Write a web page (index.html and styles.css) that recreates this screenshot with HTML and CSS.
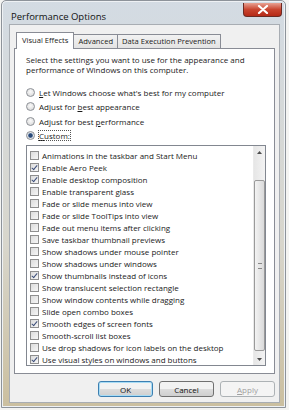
FILE: index.html
```html
<!DOCTYPE html>
<html lang="en">
<head>
  <meta charset="UTF-8" />
  <title>Performance Options</title>
  <link rel="stylesheet" href="styles.css">
</head>
<body>
  <div class="window">
    <div class="titlebar">
      <span class="title">Performance Options</span>
      <span class="close">
        <svg width="12" height="9" viewBox="0 0 12 9">
          <path d="M2 1 L10 8 M10 1 L2 8" stroke="#fff" stroke-width="2.2" stroke-linecap="round"/>
        </svg>
      </span>
    </div>

    <div class="client">
      <div class="tabs">
        <div class="tab active">Visual Effects</div>
        <div class="tab">Advanced</div>
        <div class="tab">Data Execution Prevention</div>
      </div>

      <div class="panel">
        <p class="intro">Select the settings you want to use for the appearance and<br>performance of Windows on this computer.</p>

        <div class="radios">
          <div class="radio"><span class="dot"></span><span><u>L</u>et Windows choose what's best for my computer</span></div>
          <div class="radio"><span class="dot"></span><span>Adjust for <u>b</u>est appearance</span></div>
          <div class="radio"><span class="dot"></span><span>Adjust for best <u>p</u>erformance</span></div>
          <div class="radio on"><span class="dot"></span><span class="focus"><u>C</u>ustom:</span></div>
        </div>

        <div class="listbox">
          <ul class="items">
            <li><span class="box"></span>Animations in the taskbar and Start Menu</li>
            <li class="checked"><span class="box"></span>Enable Aero Peek</li>
            <li class="checked"><span class="box"></span>Enable desktop composition</li>
            <li><span class="box"></span>Enable transparent glass</li>
            <li><span class="box"></span>Fade or slide menus into view</li>
            <li><span class="box"></span>Fade or slide ToolTips into view</li>
            <li><span class="box"></span>Fade out menu items after clicking</li>
            <li><span class="box"></span>Save taskbar thumbnail previews</li>
            <li><span class="box"></span>Show shadows under mouse pointer</li>
            <li><span class="box"></span>Show shadows under windows</li>
            <li class="checked"><span class="box"></span>Show thumbnails instead of icons</li>
            <li><span class="box"></span>Show translucent selection rectangle</li>
            <li><span class="box"></span>Show window contents while dragging</li>
            <li><span class="box"></span>Slide open combo boxes</li>
            <li class="checked"><span class="box"></span>Smooth edges of screen fonts</li>
            <li><span class="box"></span>Smooth-scroll list boxes</li>
            <li><span class="box"></span>Use drop shadows for icon labels on the desktop</li>
            <li class="checked"><span class="box"></span>Use visual styles on windows and buttons</li>
          </ul>
          <div class="scrollbar">
            <div class="arrow">
              <svg width="5" height="3" viewBox="0 0 5 3"><path d="M0 3 L2.5 0 L5 3 Z" fill="#4d4d4d"/></svg>
            </div>
            <div class="track">
              <div class="thumb"><span class="grip"></span></div>
            </div>
            <div class="arrow">
              <svg width="5" height="3" viewBox="0 0 5 3"><path d="M0 0 L2.5 3 L5 0 Z" fill="#4d4d4d"/></svg>
            </div>
          </div>
        </div>
      </div>

      <div class="buttons">
        <button class="btn default">OK</button>
        <button class="btn">Cancel</button>
        <button class="btn" disabled><u>A</u>pply</button>
      </div>
    </div>
  </div>
</body>
</html>
```

FILE: styles.css
```css
html, body {
  margin: 0;
  padding: 0;
  background: #f4f4f2;
  font-family: "Open Sans", "Noto Sans", sans-serif;
  font-size: 8px;
  color: #1a1a1a;
}
.window {
  width: 283px;
  height: 406px;
  margin-left: 1px;
  background: linear-gradient(#d3dbe3, #d8d6cc 60%, #cbbf9f);
  border: 1px solid #8d939a;
  border-radius: 5px 5px 0 0;
  box-shadow: inset 0 0 0 1px #eef1f4;
  display: flex;
  flex-direction: column;
}
.titlebar {
  height: 23px;
  display: flex;
  align-items: flex-start;
  justify-content: space-between;
}
.title {
  margin: 9px 0 0 9px;
  font-size: 9.5px;
  color: #111;
}
.close {
  width: 37px;
  height: 13px;
  margin: 2px 3px 0 0;
  border: 1px solid #6b2a22;
  border-top: none;
  border-radius: 0 0 4px 4px;
  background: linear-gradient(#e8a293, #c9452f 50%, #b52a17);
  display: flex;
  align-items: center;
  justify-content: center;
}
.client {
  margin: 0 5px 0 7px;
  height: 379px;
  background: #f0f0f0;
  border: 1px solid #a8adb3;
  padding: 7px 4px 0 4px;
  box-sizing: border-box;
}
.tabs {
  display: flex;
  align-items: flex-end;
  height: 16px;
  padding-left: 2px;
  font-size: 7.6px;
}
.tab {
  height: 13px;
  line-height: 13px;
  padding: 0 4px;
  border: 1px solid #898c95;
  border-bottom: none;
  margin-right: -1px;
  background: linear-gradient(#f2f2f2, #e3e3e3);
  white-space: nowrap;
}
.tab.active {
  height: 16px;
  line-height: 15px;
  padding: 0 5px;
  background: #fff;
  position: relative;
  z-index: 1;
  margin-bottom: -1px;
}
.panel {
  background: #fff;
  border: 1px solid #898c95;
  height: 326px;
  box-sizing: border-box;
  padding: 6px 10px 0 11px;
}
.intro {
  margin: 0;
  line-height: 10px;
}
.radios {
  margin-top: 10px;
  display: flex;
  flex-direction: column;
}
.radio {
  height: 14.5px;
  display: flex;
  align-items: center;
  gap: 4px;
}
.dot {
  width: 7px;
  height: 7px;
  border: 1px solid #8c9096;
  border-radius: 50%;
  background: radial-gradient(circle at 50% 40%, #fafafa, #d4d4d4);
}
.radio.on .dot {
  background: radial-gradient(circle, #2b4a78 0 1.8px, #9fb4cf 2.4px, #e6e6e6 3px);
}
.focus {
  outline: 1px dotted #555;
  outline-offset: 0;
  line-height: 9px;
}
.listbox {
  margin-top: 2px;
  width: 240px;
  height: 221px;
  border: 1px solid #828790;
  box-sizing: border-box;
  display: flex;
  justify-content: space-between;
}
.items {
  list-style: none;
  margin: 0;
  padding: 3px 0 0 3px;
}
.items li {
  height: 12px;
  display: flex;
  align-items: center;
  gap: 3px;
  white-space: nowrap;
}
.box {
  width: 7px;
  height: 7px;
  border: 1px solid #8f8f8f;
  background: linear-gradient(135deg, #dcdcdc, #f6f6f6);
  position: relative;
}
.checked .box::after {
  content: "";
  position: absolute;
  left: 2px;
  top: 0;
  width: 2px;
  height: 5px;
  border: solid #3d4f7a;
  border-width: 0 1.5px 1.5px 0;
  transform: rotate(40deg);
}
.scrollbar {
  width: 11px;
  display: flex;
  flex-direction: column;
  background: linear-gradient(90deg, #e6e6e6, #f3f3f3);
  border-left: 1px solid #eaeaea;
}
.arrow {
  height: 12px;
  display: flex;
  align-items: center;
  justify-content: center;
}
.track {
  flex: 1;
  padding: 22px 0 2px;
  display: flex;
}
.thumb {
  flex: 1;
  border: 1px solid #9a9a9a;
  border-radius: 2px;
  background: linear-gradient(90deg, #f3f3f3, #dadada);
  display: flex;
  align-items: center;
  justify-content: center;
}
.grip {
  width: 4px;
  height: 4px;
  border-top: 1px solid #888;
  border-bottom: 1px solid #888;
}
.buttons {
  display: flex;
  justify-content: flex-end;
  gap: 6px;
  margin-top: 7px;
}
.btn {
  width: 55px;
  height: 16px;
  padding: 0;
  font: inherit;
  color: #111;
  border: 1px solid #707070;
  border-radius: 3px;
  background: linear-gradient(#f2f2f2 50%, #dddddd 50%, #cfcfcf);
}
.btn.default {
  border-color: #3c7fb1;
  box-shadow: inset 0 0 0 1px #a8dcf5;
}
.btn:disabled {
  color: #a0a0a0;
  border-color: #adb2b5;
  background: #f4f4f4;
}
```
